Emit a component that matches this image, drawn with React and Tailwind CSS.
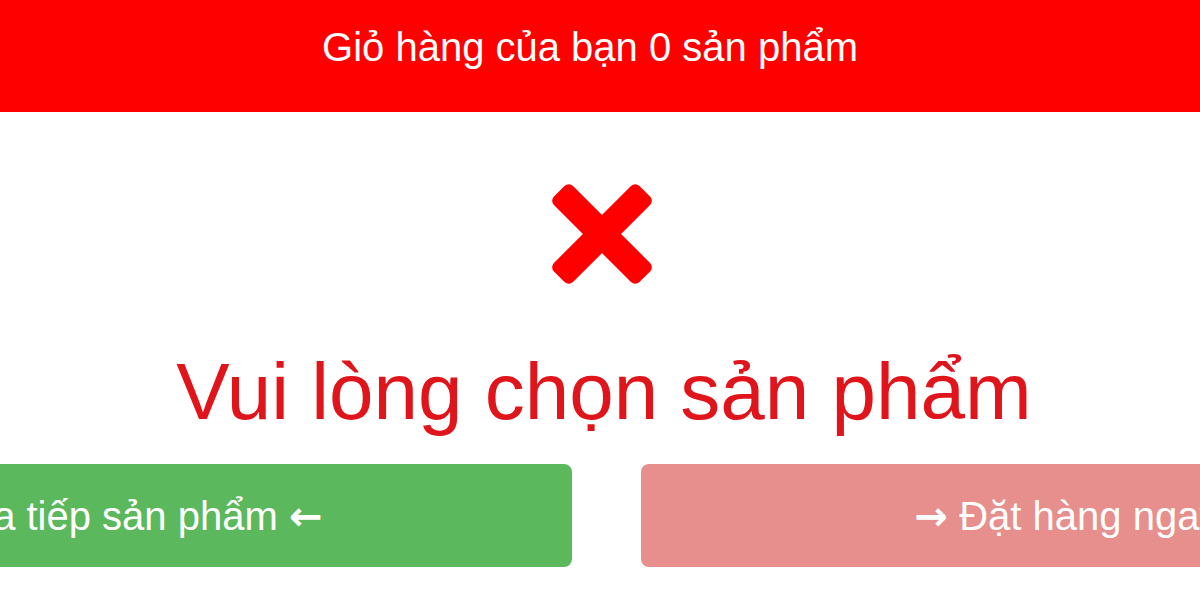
import React from 'react';

const CrossIcon = () => (
  <svg width="106" height="106" viewBox="0 0 106 106" aria-hidden="true">
    <g transform="rotate(45 53 53)" fill="#ff0000">
      <rect x="-7.5" y="39.5" width="121" height="27" rx="6" />
      <rect x="39.5" y="-7.5" width="27" height="121" rx="6" />
    </g>
  </svg>
);

const arrowFont = { fontFamily: '"DejaVu Sans", sans-serif' };

const EmptyCart = () => {
  return (
    <div
      className="w-[1200px] h-[600px] overflow-hidden bg-white"
      style={{ fontFamily: '"Liberation Sans", Arial, sans-serif' }}
    >
      <div className="h-[112px] bg-[#ff0000] flex items-center justify-center pr-[20px] pb-[18px]">
        <h2 className="text-white text-[40px] leading-none">Giỏ hàng của bạn 0 sản phẩm</h2>
      </div>

      <div className="flex flex-col items-center">
        <div className="mt-[69px] ml-[4px]">
          <CrossIcon />
        </div>
        <p className="mt-[65px] ml-[8px] text-[80px] leading-none text-[#e0141b] whitespace-nowrap">
          Vui lòng chọn sản phẩm
        </p>
      </div>

      <div className="flex gap-[69px] ml-[-276px] mt-[32px]">
        <button className="shrink-0 w-[848px] h-[103px] pr-[36px] rounded-[8px] bg-[#5cb85c] text-white text-[40px] leading-none">
          Mua tiếp sản phẩm <span className="font-bold" style={arrowFont}>←</span>
        </button>
        <button
          disabled
          className="shrink-0 w-[812px] h-[103px] pl-[40px] rounded-[8px] bg-[#e68f8c] text-white text-[40px] leading-none"
        >
          <span className="font-bold" style={arrowFont}>→</span> Đặt hàng ngay
        </button>
      </div>
    </div>
  );
};

export default function App() {
  return <EmptyCart />;
}
